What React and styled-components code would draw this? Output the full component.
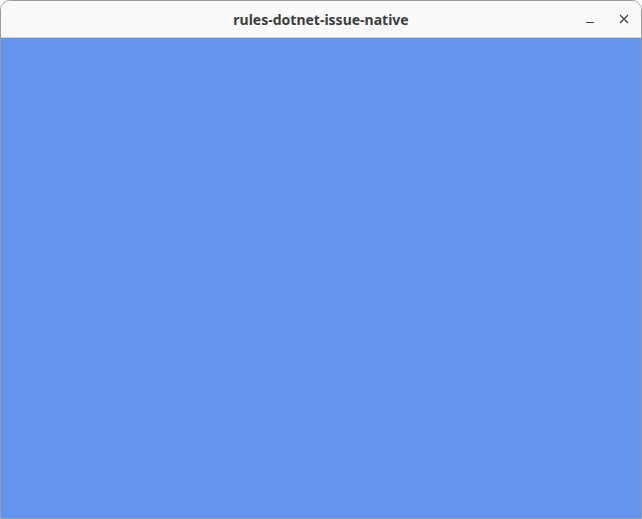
import styled, { createGlobalStyle } from "styled-components";

const GlobalStyle = createGlobalStyle`
    html, body {
        margin: 0;
        padding: 0;
        background: #ffffff;
    }
`;

const Window = styled.div`
    box-sizing: border-box;
    width: 642px;
    height: 519px;
    display: flex;
    flex-direction: column;
    border: 1px solid #9c9c9c;
    border-radius: 10px 10px 0 0;
    overflow: hidden;
`;

const TitleBar = styled.div`
    height: 36px;
    flex-shrink: 0;
    display: grid;
    grid-template-columns: 1fr auto 1fr;
    align-items: center;
    background: #fafafa;
    border-bottom: 1px solid #d3d3d3;
`;

const Title = styled.span`
    grid-column: 2;
    font-family: "Noto Sans", "DejaVu Sans", sans-serif;
    font-weight: bold;
    font-size: 14px;
    color: #3d3d3d;
`;

const Controls = styled.div`
    grid-column: 3;
    justify-self: end;
    display: flex;
    align-items: center;
    gap: 12px;
    padding-right: 6px;
`;

const ControlButton = styled.div`
    width: 22px;
    height: 22px;
    display: flex;
    align-items: center;
    justify-content: center;
    color: #3d3d3d;
`;

const Content = styled.div`
    flex: 1;
    background: #6495ed;
`;

const App = () => {
    return (
        <>
            <GlobalStyle />
            <Window>
                <TitleBar>
                    <Title>rules-dotnet-issue-native</Title>
                    <Controls>
                        <ControlButton>
                            <svg width="10" height="10" viewBox="0 0 10 10">
                                <line x1="1" y1="8.5" x2="9" y2="8.5" stroke="currentColor" strokeWidth="1" />
                            </svg>
                        </ControlButton>
                        <ControlButton>
                            <svg width="10" height="10" viewBox="0 0 10 10">
                                <path d="M1 1 L9 9 M9 1 L1 9" stroke="currentColor" strokeWidth="1.2" />
                            </svg>
                        </ControlButton>
                    </Controls>
                </TitleBar>
                <Content />
            </Window>
        </>
    );
}

export default App;
